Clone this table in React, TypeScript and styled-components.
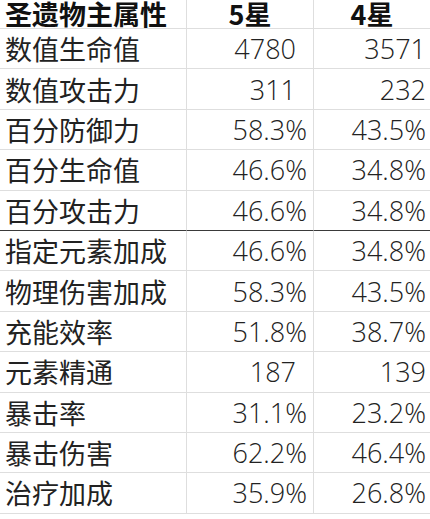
import styled, { createGlobalStyle } from "styled-components";

const GlobalStyle = createGlobalStyle`
  html, body {
    margin: 0;
    padding: 0;
    background: #fff;
  }
`;

const Table = styled.div`
  display: grid;
  grid-template-columns: 187px 127px 116px;
  width: 430px;
  color: #1f1f1f;
`;

const Row = styled.div<{ $header?: boolean; $divider?: boolean }>`
  display: contents;

  & > div {
    height: ${p => (p.$header ? "29px" : "40.4px")};
    border-bottom: ${p => (p.$divider ? "1.5px solid #3a3a3a" : "1px solid #dedede")};
  }
`;

const Cell = styled.div<{ $last?: boolean }>`
  box-sizing: border-box;
  display: flex;
  align-items: center;
  border-right: ${p => (p.$last ? "none" : "1px solid #dedede")};
  white-space: nowrap;
`;

const NameCell = styled(Cell)`
  padding-left: 5px;
  font-family: "Noto Sans CJK SC", sans-serif;
  font-size: 27px;
  color: #222;
`;

const HeadName = styled(NameCell)`
  font-size: 27px;
  font-weight: 700;
  color: #111;
  line-height: 1;
  padding-bottom: 1px;
`;

const HeadStar = styled(Cell)`
  justify-content: center;
  font-family: "Noto Sans CJK SC", sans-serif;
  font-size: 27px;
  font-weight: 700;
  color: #111;
  line-height: 1;
  padding-bottom: 1px;
`;

const ValueCell = styled(Cell)<{ $pad: number }>`
  justify-content: flex-end;
  padding-right: ${p => p.$pad}px;
  font-family: "Open Sans", "Noto Sans", sans-serif;
  font-size: 27px;
  font-weight: 300;
  color: #222;
`;

type Stat = { name: string; five: string; four: string; divider?: boolean };

const stats: Stat[] = [
  { name: "数值生命值", five: "4780", four: "3571" },
  { name: "数值攻击力", five: "311", four: "232" },
  { name: "百分防御力", five: "58.3%", four: "43.5%" },
  { name: "百分生命值", five: "46.6%", four: "34.8%" },
  { name: "百分攻击力", five: "46.6%", four: "34.8%", divider: true },
  { name: "指定元素加成", five: "46.6%", four: "34.8%" },
  { name: "物理伤害加成", five: "58.3%", four: "43.5%" },
  { name: "充能效率", five: "51.8%", four: "38.7%" },
  { name: "元素精通", five: "187", four: "139" },
  { name: "暴击率", five: "31.1%", four: "23.2%" },
  { name: "暴击伤害", five: "62.2%", four: "46.4%" },
  { name: "治疗加成", five: "35.9%", four: "26.8%" },
];

const isPercent = (v: string) => v.endsWith("%");

export default function App() {
  return (
    <>
      <GlobalStyle />
      <Table>
        <Row $header>
          <HeadName>圣遗物主属性</HeadName>
          <HeadStar>5星</HeadStar>
          <HeadStar $last>4星</HeadStar>
        </Row>
        {stats.map(s => (
          <Row key={s.name} $divider={s.divider}>
            <NameCell>{s.name}</NameCell>
            <ValueCell $pad={isPercent(s.five) ? 6 : 17}>{s.five}</ValueCell>
            <ValueCell $last $pad={4}>{s.four}</ValueCell>
          </Row>
        ))}
      </Table>
    </>
  );
}
